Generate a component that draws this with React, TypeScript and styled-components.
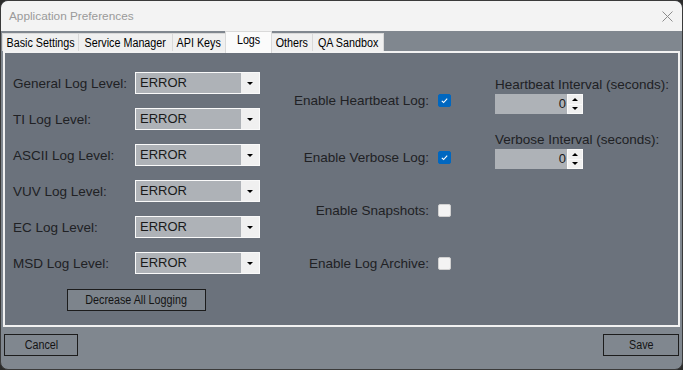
import styled, { createGlobalStyle } from 'styled-components'

const GlobalStyle = createGlobalStyle`
    html, body {
        margin: 0;
        padding: 0;
        background: #2b2b2b;
        overflow: hidden;
    }
    * {
        box-sizing: border-box;
    }
`

const Window = styled.div`
    width: 683px;
    height: 370px;
    display: flex;
    flex-direction: column;
    border: 1px solid #3a3a3a;
    border-radius: 8px;
    overflow: hidden;
    background: #80878f;
    font-family: "Liberation Sans", Arial, sans-serif;
`

const TitleBar = styled.div`
    height: 30px;
    flex: none;
    display: flex;
    align-items: center;
    justify-content: space-between;
    background: #f3f3f3;
    padding: 0 9px 0 8px;
`

const Title = styled.span`
    font-size: 11.8px;
    color: #9a9a9a;
`

const CloseIcon = () => (
    <svg width="11" height="11" viewBox="0 0 11 11">
        <path d="M0.5 0.5 L10.5 10.5 M10.5 0.5 L0.5 10.5" stroke="#8c8c8c" strokeWidth="1" />
    </svg>
)

const Body = styled.div`
    flex: 1;
    display: flex;
    flex-direction: column;
    padding: 0 2px;
`

const TabStrip = styled.div`
    height: 20px;
    flex: none;
    display: flex;
    align-items: flex-end;
    position: relative;
    z-index: 1;
`

const Tab = styled.div<{ $width: number, $active?: boolean }>`
    width: ${p => p.$width}px;
    height: ${p => p.$active ? 22 : 18}px;
    margin-bottom: ${p => p.$active ? -2 : 0}px;
    display: flex;
    justify-content: center;
    padding-top: ${p => p.$active ? 1 : 2}px;
    background: ${p => p.$active ? '#fbfbfb' : '#f0f0f0'};
    border: 1px solid #d9d9d9;
    border-bottom: none;
    margin-left: -1px;
    color: #000;
    white-space: nowrap;
`

// the dialog font is a narrow sans, squeeze the text to match
const Narrow = styled.span`
    display: inline-block;
    font-size: 12.5px;
    line-height: 15px;
    transform: scaleX(0.86);
`

const Panel = styled.div`
    height: 276px;
    flex: none;
    display: flex;
    background: #6b727c;
    border: 2px solid #f2f2f2;
    padding: 19px 0 0 8px;
`

const LevelColumn = styled.div`
    width: 247px;
    display: flex;
    flex-direction: column;
    gap: 14px;
`

const LevelRow = styled.div`
    display: flex;
    align-items: center;
    height: 22px;
`

const Label = styled.span`
    font-size: 13.5px;
    color: #202124;
    white-space: nowrap;
`

const LevelLabel = styled(Label)`
    width: 122px;
`

const Combo = styled.div`
    width: 125px;
    height: 22px;
    display: flex;
    border: 1px solid #fafafa;
    background: #aeb2b7;
`

const ComboText = styled.span`
    flex: 1;
    padding-left: 4px;
    line-height: 20px;
    font-size: 13px;
    color: #1a1a1a;
`

const ComboArrow = styled.span`
    width: 18px;
    display: flex;
    align-items: center;
    justify-content: center;
    background: #f0f0f0;
    &::after {
        content: '';
        border-left: 3px solid transparent;
        border-right: 3px solid transparent;
        border-top: 3px solid #000;
    }
`

const PlainButton = styled.button<{ $width: number }>`
    width: ${p => p.$width}px;
    height: 22px;
    padding: 0;
    display: flex;
    align-items: center;
    justify-content: center;
    background: #80878f;
    border: 1px solid #1c1c1c;
    font-family: "Liberation Sans", Arial, sans-serif;
    color: #141414;
    white-space: nowrap;
`

const DecreaseButton = styled(PlainButton)`
    align-self: center;
    margin-top: 1px;
    background: #7d848c;
`

const CheckColumn = styled.div`
    width: 191px;
    margin-top: -2px;
    display: flex;
    flex-direction: column;
    align-items: flex-end;
`

const CheckRow = styled.div<{ $top: number }>`
    height: 20px;
    margin-top: ${p => p.$top}px;
    display: flex;
    align-items: center;
    gap: 9px;
`

const CheckBox = styled.span<{ $checked: boolean }>`
    width: 13px;
    height: 13px;
    display: flex;
    align-items: center;
    justify-content: center;
    border-radius: 2px;
    background: ${p => p.$checked ? '#0067c0' : '#f3f3f3'};
    border: 1px solid ${p => p.$checked ? '#0067c0' : '#d0d0d0'};
`

const CheckMark = () => (
    <svg width="9" height="9" viewBox="0 0 9 9">
        <path d="M1.8 4.8 L3.6 6.5 L7.2 2.6" stroke="#fff" strokeWidth="1.1" fill="none" />
    </svg>
)

const IntervalColumn = styled.div`
    margin-left: 44px;
    padding-top: 2px;
    display: flex;
    flex-direction: column;
`

const IntervalLabel = styled(Label)<{ $top: number }>`
    line-height: 16px;
    margin-top: ${p => p.$top}px;
    margin-bottom: 1px;
`

const Spinner = styled.div`
    width: 88px;
    height: 20px;
    display: flex;
    background: #aeb2b7;
`

const SpinnerValue = styled.span`
    flex: 1;
    text-align: right;
    padding-right: 1px;
    line-height: 20px;
    font-size: 13px;
    color: #1a1a1a;
`

const SpinnerButtons = styled.div`
    width: 16px;
    display: flex;
    flex-direction: column;
    border: 1px solid #fafafa;
    background: #fafafa;
    gap: 1px;
`

const SpinnerArrow = styled.span<{ $up?: boolean }>`
    flex: 1;
    display: flex;
    align-items: center;
    justify-content: center;
    background: #f0f0f0;
    &::after {
        content: '';
        border-left: 3px solid transparent;
        border-right: 3px solid transparent;
        ${p => p.$up ? 'border-bottom: 3px solid #000;' : 'border-top: 3px solid #000;'}
    }
`

const Footer = styled.div`
    flex: 1;
    display: flex;
    justify-content: space-between;
    align-items: flex-start;
    padding: 7px 1px 0;
`

const tabs = [
    { name: 'Basic Settings', width: 77 },
    { name: 'Service Manager', width: 95 },
    { name: 'API Keys', width: 54 },
    { name: 'Logs', width: 47, active: true },
    { name: 'Others', width: 42 },
    { name: 'QA Sandbox', width: 72 },
]

const levels = ['General', 'TI', 'ASCII', 'VUV', 'EC', 'MSD']

const checks = [
    { label: 'Enable Heartbeat Log:', checked: true, top: 20 },
    { label: 'Enable Verbose Log:', checked: true, top: 37 },
    { label: 'Enable Snapshots:', checked: false, top: 33 },
    { label: 'Enable Log Archive:', checked: false, top: 33 },
]

const intervals = [
    { label: 'Heartbeat Interval (seconds):', top: 3 },
    { label: 'Verbose Interval (seconds):', top: 18 },
]

const App = () => {
    return (
        <>
            <GlobalStyle />
            <Window>
                <TitleBar>
                    <Title>Application Preferences</Title>
                    <CloseIcon />
                </TitleBar>
                <Body>
                    <TabStrip>
                        {tabs.map(tab => (
                            <Tab key={tab.name} $width={tab.width} $active={tab.active}>
                                <Narrow>{tab.name}</Narrow>
                            </Tab>
                        ))}
                    </TabStrip>
                    <Panel>
                        <LevelColumn>
                            {levels.map(level => (
                                <LevelRow key={level}>
                                    <LevelLabel>{level} Log Level:</LevelLabel>
                                    <Combo>
                                        <ComboText>ERROR</ComboText>
                                        <ComboArrow />
                                    </Combo>
                                </LevelRow>
                            ))}
                            <DecreaseButton $width={139}>
                                <Narrow>Decrease All Logging</Narrow>
                            </DecreaseButton>
                        </LevelColumn>
                        <CheckColumn>
                            {checks.map(check => (
                                <CheckRow key={check.label} $top={check.top}>
                                    <Label>{check.label}</Label>
                                    <CheckBox $checked={check.checked}>
                                        {check.checked && <CheckMark />}
                                    </CheckBox>
                                </CheckRow>
                            ))}
                        </CheckColumn>
                        <IntervalColumn>
                            {intervals.map(interval => (
                                <div key={interval.label}>
                                    <IntervalLabel as="div" $top={interval.top}>{interval.label}</IntervalLabel>
                                    <Spinner>
                                        <SpinnerValue>0</SpinnerValue>
                                        <SpinnerButtons>
                                            <SpinnerArrow $up />
                                            <SpinnerArrow />
                                        </SpinnerButtons>
                                    </Spinner>
                                </div>
                            ))}
                        </IntervalColumn>
                    </Panel>
                    <Footer>
                        <PlainButton $width={74}><Narrow>Cancel</Narrow></PlainButton>
                        <PlainButton $width={76}><Narrow>Save</Narrow></PlainButton>
                    </Footer>
                </Body>
            </Window>
        </>
    )
}

export default App
